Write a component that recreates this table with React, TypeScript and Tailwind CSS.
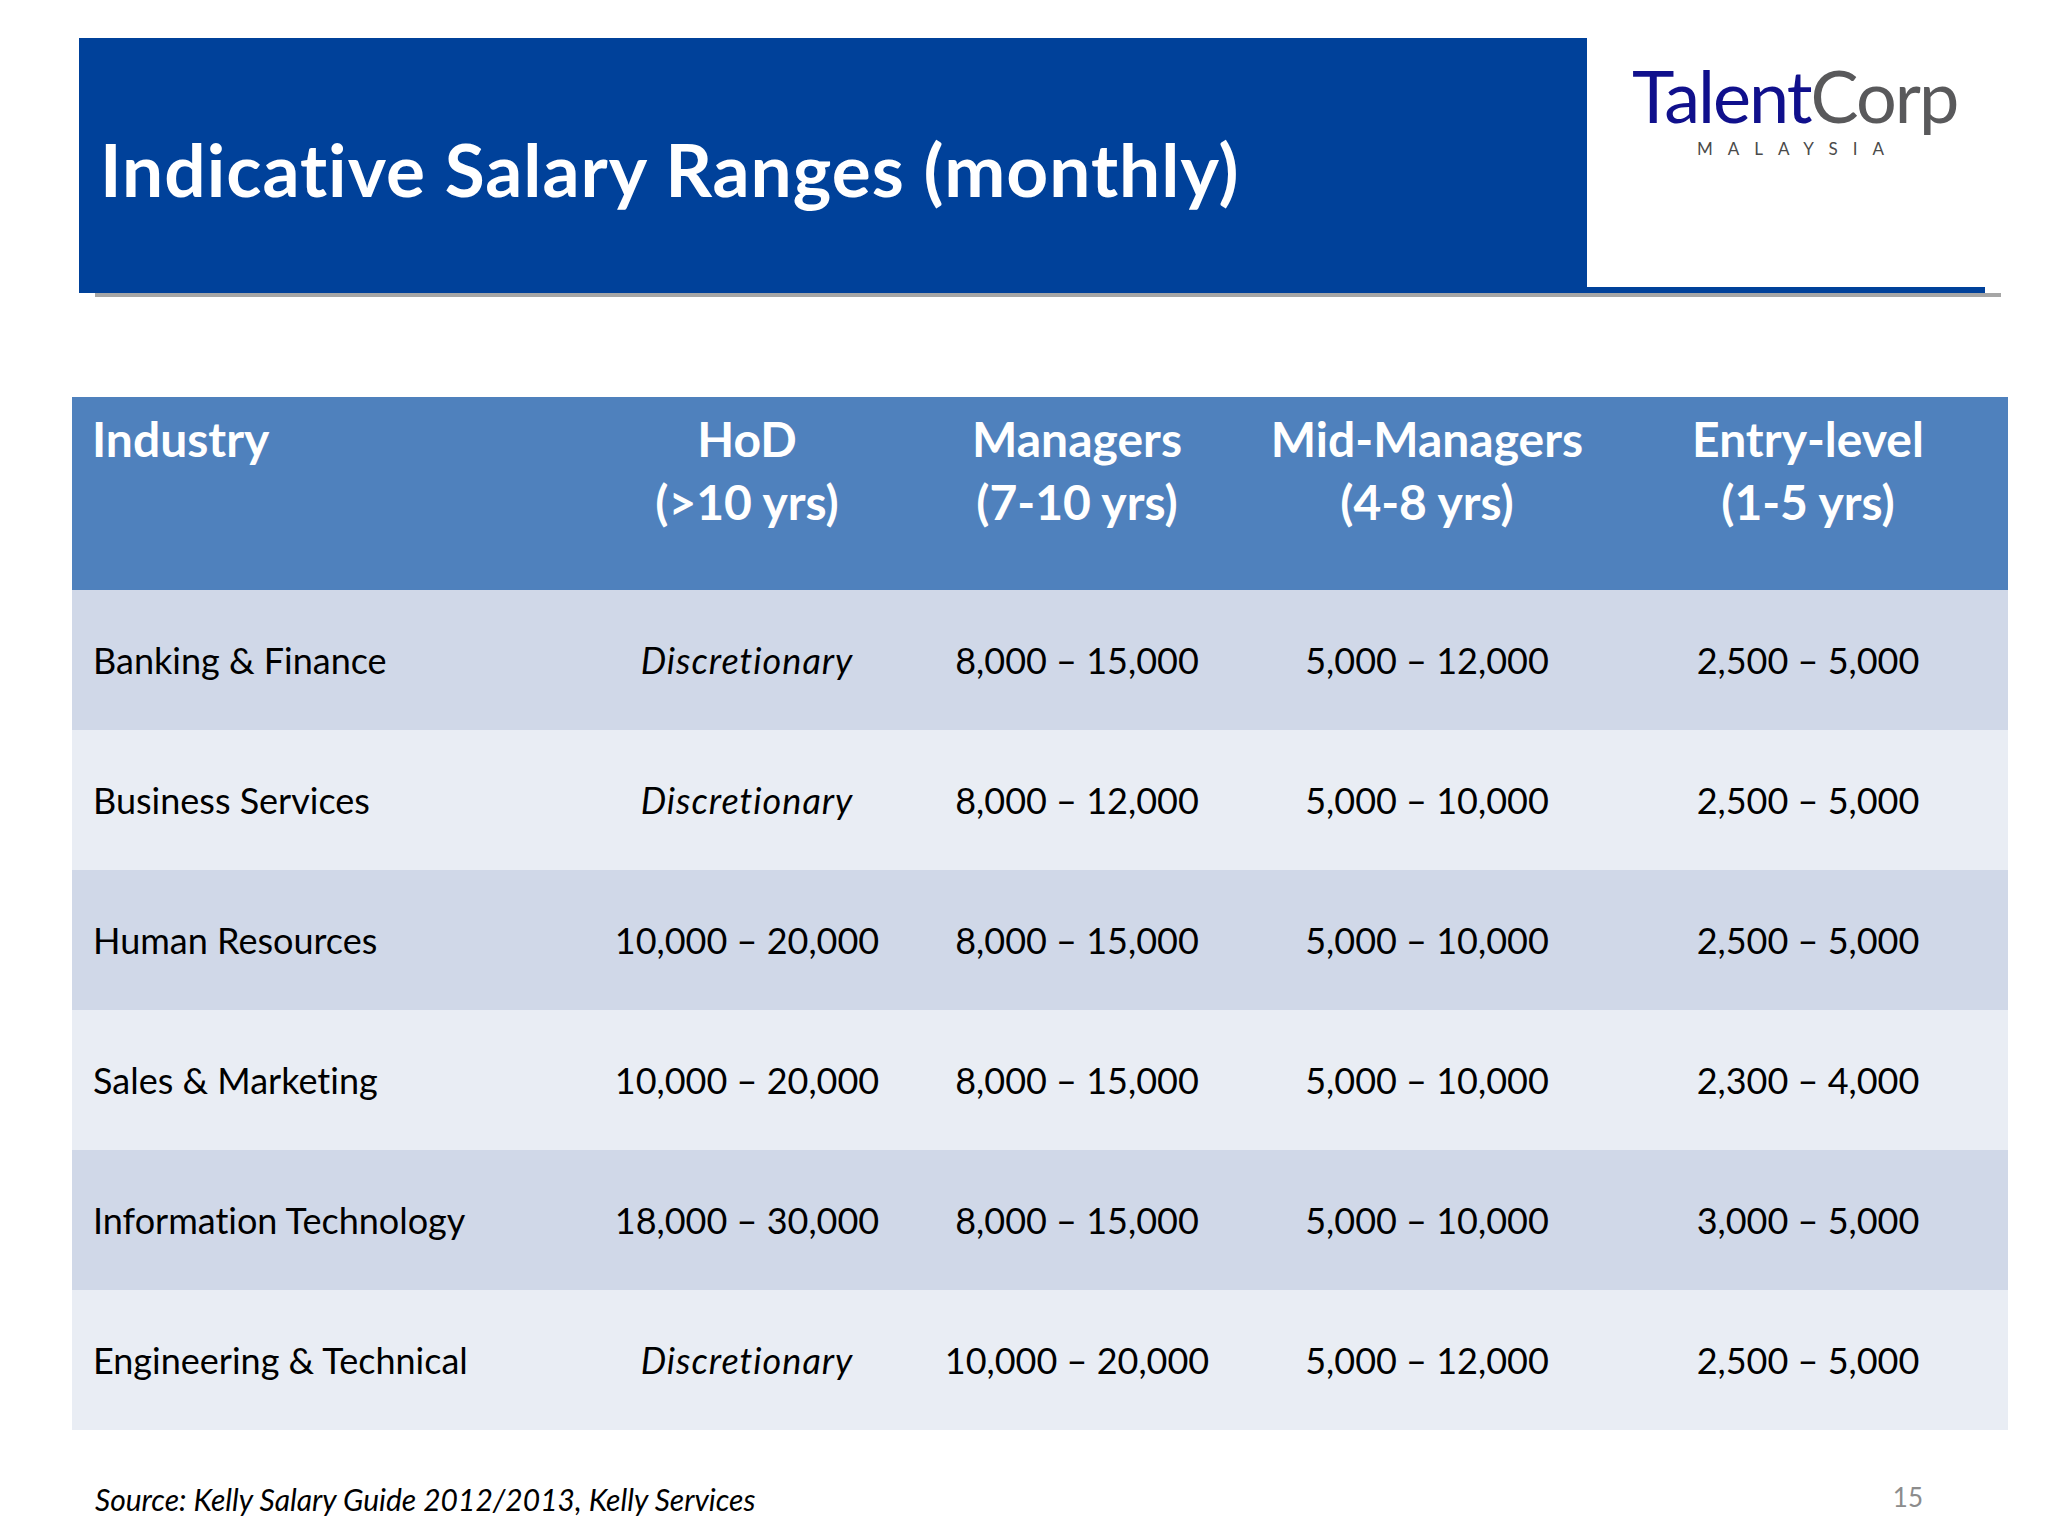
import React from 'react';

type Row = {
  industry: string;
  hod: string;
  managers: string;
  mid: string;
  entry: string;
};

const rows: Row[] = [
  { industry: 'Banking & Finance', hod: 'Discretionary', managers: '8,000 – 15,000', mid: '5,000 – 12,000', entry: '2,500 – 5,000' },
  { industry: 'Business Services', hod: 'Discretionary', managers: '8,000 – 12,000', mid: '5,000 – 10,000', entry: '2,500 – 5,000' },
  { industry: 'Human Resources', hod: '10,000 – 20,000', managers: '8,000 – 15,000', mid: '5,000 – 10,000', entry: '2,500 – 5,000' },
  { industry: 'Sales & Marketing', hod: '10,000 – 20,000', managers: '8,000 – 15,000', mid: '5,000 – 10,000', entry: '2,300 – 4,000' },
  { industry: 'Information Technology', hod: '18,000 – 30,000', managers: '8,000 – 15,000', mid: '5,000 – 10,000', entry: '3,000 – 5,000' },
  { industry: 'Engineering & Technical', hod: 'Discretionary', managers: '10,000 – 20,000', mid: '5,000 – 12,000', entry: '2,500 – 5,000' },
];

const cols = 'grid grid-cols-[514px_322px_338px_362px_400px]';

const Logo = () => (
  <div className="flex flex-col items-start pl-[45px] pt-[21px]">
    <div className="text-[72px] leading-none tracking-[-2px] font-['Lato',sans-serif]">
      <span className="text-[#10108c]">Talent</span>
      <span className="text-[#59595b]">Corp</span>
    </div>
    <div className="mt-[9px] pl-[65px] text-[17px] leading-none tracking-[15px] text-[#4a4a4a] font-['Lato',sans-serif]">
      MALAYSIA
    </div>
  </div>
);

const App = () => {
  return (
    <div className="w-[2048px] h-[1536px] bg-white font-['Lato',sans-serif] [font-variant-ligatures:none] overflow-hidden">
      {/* title bar */}
      <div className="flex ml-[79px] mt-[38px] h-[255px]">
        <div className="w-[1508px] h-full bg-[#00419a] pl-[21px] pt-[95px]">
          <h1 className="text-[73px] leading-[72px] tracking-[1px] font-bold text-white">Indicative Salary Ranges (monthly)</h1>
        </div>
        <div className="w-[398px] h-full flex flex-col justify-between">
          <Logo />
          <div className="h-[6px] bg-[#00419a]" />
        </div>
      </div>
      <div className="ml-[95px] w-[1906px] h-[4px] bg-[#a6a6a6]" />

      {/* table */}
      <div className="ml-[72px] mt-[100px] w-[1936px]">
        <div className={`${cols} h-[193px] bg-[#4f81bd] text-white font-bold text-[48px] leading-[63px] pt-[10px]`}>
          <div className="pl-[20px]">Industry</div>
          <div className="text-center">HoD<br />(&gt;10 yrs)</div>
          <div className="text-center">Managers<br />(7-10 yrs)</div>
          <div className="text-center">Mid-Managers<br />(4-8 yrs)</div>
          <div className="text-center">Entry-level<br />(1-5 yrs)</div>
        </div>
        {rows.map((r, i) => (
          <div
            key={r.industry}
            className={`${cols} h-[140px] items-center text-[36px] leading-none text-black ${i % 2 === 0 ? 'bg-[#d0d8e8]' : 'bg-[#e9edf4]'}`}
          >
            <div className="pl-[21px]">{r.industry}</div>
            <div className={`text-center ${r.hod === 'Discretionary' ? 'italic tracking-[1px]' : ''}`}>{r.hod}</div>
            <div className="text-center">{r.managers}</div>
            <div className="text-center">{r.mid}</div>
            <div className="text-center">{r.entry}</div>
          </div>
        ))}
      </div>

      {/* footer */}
      <div className="flex items-start justify-between ml-[95px] w-[1828px] mt-[54px]">
        <p className="italic text-[30px] leading-none text-black">Source: Kelly Salary Guide 2012/2013, Kelly Services</p>
        <span className="text-[26px] leading-none text-[#8c8c8c]">15</span>
      </div>
    </div>
  );
};

export default App;
